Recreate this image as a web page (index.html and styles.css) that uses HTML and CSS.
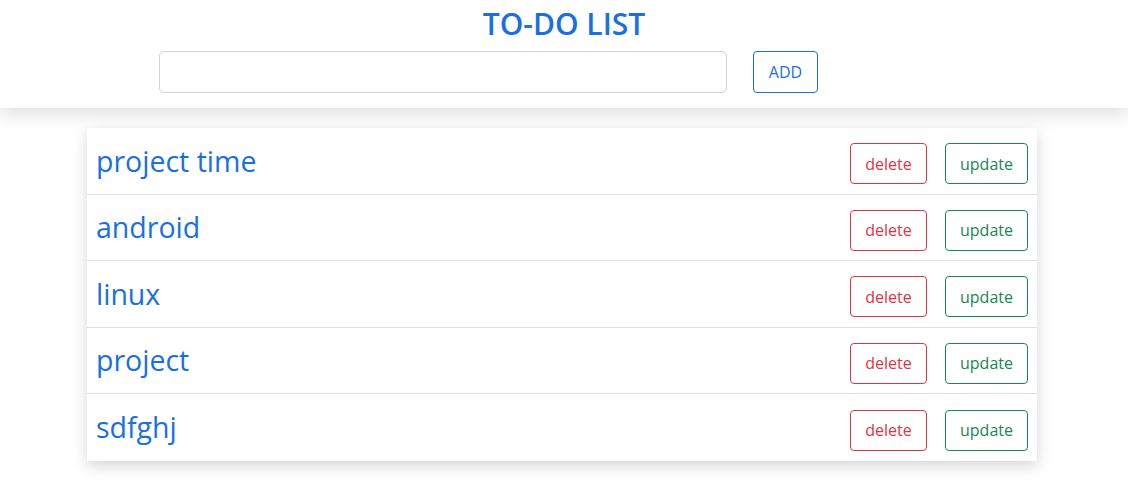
FILE: index.html
```html
<!DOCTYPE html>
<html>
<head>
<meta charset="utf-8">
<link rel="stylesheet" href="styles.css">
</head>
<body>
<header class="top">
  <h2 class="title">TO-DO LIST</h2>
  <div class="add-row">
    <input class="add-input" type="text">
    <button class="btn btn-primary">ADD</button>
  </div>
</header>
<main class="list">
  <div class="item"><span class="item-text">project time</span><div class="actions"><button class="btn btn-danger">delete</button><button class="btn btn-success">update</button></div></div>
  <div class="item"><span class="item-text">android</span><div class="actions"><button class="btn btn-danger">delete</button><button class="btn btn-success">update</button></div></div>
  <div class="item"><span class="item-text">linux</span><div class="actions"><button class="btn btn-danger">delete</button><button class="btn btn-success">update</button></div></div>
  <div class="item"><span class="item-text">project</span><div class="actions"><button class="btn btn-danger">delete</button><button class="btn btn-success">update</button></div></div>
  <div class="item"><span class="item-text">sdfghj</span><div class="actions"><button class="btn btn-danger">delete</button><button class="btn btn-success">update</button></div></div>
</main>
</body>
</html>
```
FILE: styles.css
```css
* { box-sizing: border-box; }
html, body { background: #fff; }
body {
  margin: 0;
  padding-bottom: 42px;
  font-family: "Open Sans", "Noto Sans", sans-serif;
}
.top {
  background: #fff;
  height: 108px;
  box-shadow: 0 6px 18px rgba(0,0,0,0.13);
  display: flex;
  flex-direction: column;
  align-items: center;
  position: relative;
  z-index: 1;
}
.title {
  margin: 4px 0 0;
  height: 47px;
  font-size: 30px;
  font-weight: 600;
  color: #1a6fe3;
  line-height: 40px;
}
.add-row {
  align-self: flex-start;
  margin-left: 159px;
  display: flex;
  gap: 26px;
}
.add-input {
  width: 568px;
  height: 42px;
  border: 1px solid #ced4da;
  border-radius: 5px;
}
.btn {
  background: #fff;
  border: 1px solid;
  border-radius: 4px;
  font-family: inherit;
  font-size: 16px;
  height: 41px;
  padding: 0;
}
.btn-primary { color: #1a6fe3; border-color: #1a6fe3; width: 65px; height: 42px; }
.btn-danger { color: #dc3545; border-color: #dc3545; width: 77px; }
.btn-success { color: #198754; border-color: #198754; width: 83px; }
.list {
  margin: 20px 0 0 87px;
  width: 950px;
  background: #fff;
  box-shadow: 0 5px 14px rgba(0,0,0,0.16);
}
.item {
  height: 66.5px;
  display: flex;
  align-items: center;
  justify-content: space-between;
  padding: 0 9px;
  border-bottom: 1px solid #dee2e6;
}
.item:last-child { border-bottom: none; }
.item-text {
  font-size: 28.5px;
  color: #1a6fe3;
}
.actions {
  display: flex;
  gap: 18px;
  margin-top: 6px;
}
```
